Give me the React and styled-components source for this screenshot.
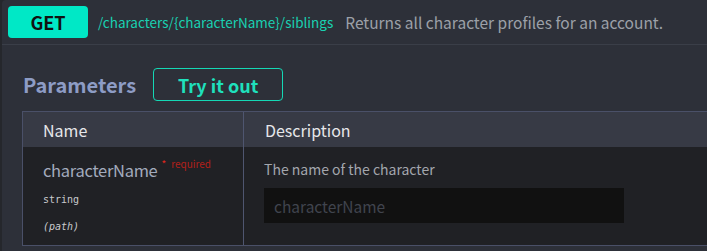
import styled, { createGlobalStyle } from "styled-components";

const GlobalStyle = createGlobalStyle`
    html, body {
        margin: 0;
        padding: 0;
        background-color: #25272c;
        font-family: "Noto Sans CJK KR", "Noto Sans", sans-serif;
        overflow: hidden;
    }
`;

const Opblock = styled.div`
    margin-left: 2px;
    min-height: 251px;
    background-color: #2d3039;
    border-top-left-radius: 4px;
    overflow: hidden;
`;

const Summary = styled.div`
    display: flex;
    align-items: center;
    height: 44px;
    padding: 0 6px;
    border-bottom: 1px solid #3a3e48;
    white-space: nowrap;
`;

const Method = styled.span`
    display: flex;
    align-items: center;
    justify-content: center;
    width: 80px;
    height: 32px;
    border-radius: 4px;
    background-color: #00e8c6;
    color: #111;
    font-weight: 700;
    font-size: 18px;
`;

const Path = styled.span`
    margin-left: 10px;
    color: #19d1b2;
    font-size: 13.5px;
`;

const SummaryText = styled.span`
    margin-left: 12px;
    color: #9ca0a8;
    font-size: 15.5px;
`;

const SectionHeader = styled.div`
    display: flex;
    align-items: center;
    gap: 17px;
    padding: 23px 0 10px 21px;
`;

const SectionTitle = styled.h4`
    margin: 0;
    color: #8d9cc5;
    font-size: 20px;
    font-weight: 700;
`;

const TryButton = styled.button`
    width: 130px;
    height: 33px;
    background: transparent;
    border: 1px solid #15d8b5;
    border-radius: 4px;
    color: #1fe0bd;
    font-family: inherit;
    font-weight: 700;
    font-size: 18px;
    padding: 0;
`;

const Table = styled.div`
    margin-left: 20px;
    width: calc(100% + 40px);
    border: 1px solid #4a5068;
    display: grid;
    grid-template-columns: 221px 1fr;
`;

const HeadCell = styled.div`
    height: 35px;
    display: flex;
    align-items: center;
    padding-left: ${(p) => p.$pad}px;
    background-color: #373a45;
    color: #e6e7ea;
    font-size: 16px;
    border-right: ${(p) => (p.$divider ? "1px solid #4f5670" : "none")};
`;

const BodyCell = styled.div`
    height: 98px;
    box-sizing: border-box;
    padding: ${(p) => p.$top}px 0 0 ${(p) => p.$pad}px;
    background-color: #202125;
    border-right: ${(p) => (p.$divider ? "1px solid #4f5670" : "none")};
`;

const ParamName = styled.div`
    display: flex;
    align-items: flex-start;
    color: #a3abbd;
    font-size: 16.5px;
    letter-spacing: -0.3px;
    line-height: 22px;
`;

const Required = styled.span`
    margin-left: 4px;
    margin-top: -2px;
    color: #b3201a;
    font-size: 10px;
    letter-spacing: 0;
    line-height: 14px;
    span {
        color: #e6261c;
        margin-right: 5px;
    }
`;

const ParamType = styled.div`
    margin-top: 13px;
    color: #c9cacd;
    font-family: "DejaVu Sans Mono", monospace;
    font-size: 10px;
`;

const ParamIn = styled.div`
    margin-top: 16px;
    color: #c9cacd;
    font-family: "DejaVu Sans Mono", monospace;
    font-style: italic;
    font-size: 10px;
`;

const Description = styled.div`
    color: #a3a6ad;
    font-size: 14px;
    line-height: 18px;
`;

const Input = styled.input`
    display: block;
    margin-top: 10px;
    width: 360px;
    height: 35px;
    box-sizing: border-box;
    border: none;
    outline: none;
    background-color: #111111;
    padding: 0 10px;
    color: #d0d0d0;
    font-family: inherit;
    font-size: 15.5px;
    &::placeholder {
        color: #40444e;
    }
`;

export default function App() {
    return (
        <>
            <GlobalStyle />
            <Opblock>
                <Summary>
                    <Method>GET</Method>
                    <Path>/characters/{"{characterName}"}/siblings</Path>
                    <SummaryText>Returns all character profiles for an account.</SummaryText>
                </Summary>
                <SectionHeader>
                    <SectionTitle>Parameters</SectionTitle>
                    <TryButton>Try it out</TryButton>
                </SectionHeader>
                <Table>
                    <HeadCell $pad={20} $divider>Name</HeadCell>
                    <HeadCell $pad={21}>Description</HeadCell>
                    <BodyCell $pad={20} $top={12} $divider>
                        <ParamName>
                            characterName
                            <Required>
                                <span>*</span>required
                            </Required>
                        </ParamName>
                        <ParamType>string</ParamType>
                        <ParamIn>(path)</ParamIn>
                    </BodyCell>
                    <BodyCell $pad={20} $top={13}>
                        <Description>The name of the character</Description>
                        <Input placeholder="characterName" />
                    </BodyCell>
                </Table>
            </Opblock>
        </>
    );
}
